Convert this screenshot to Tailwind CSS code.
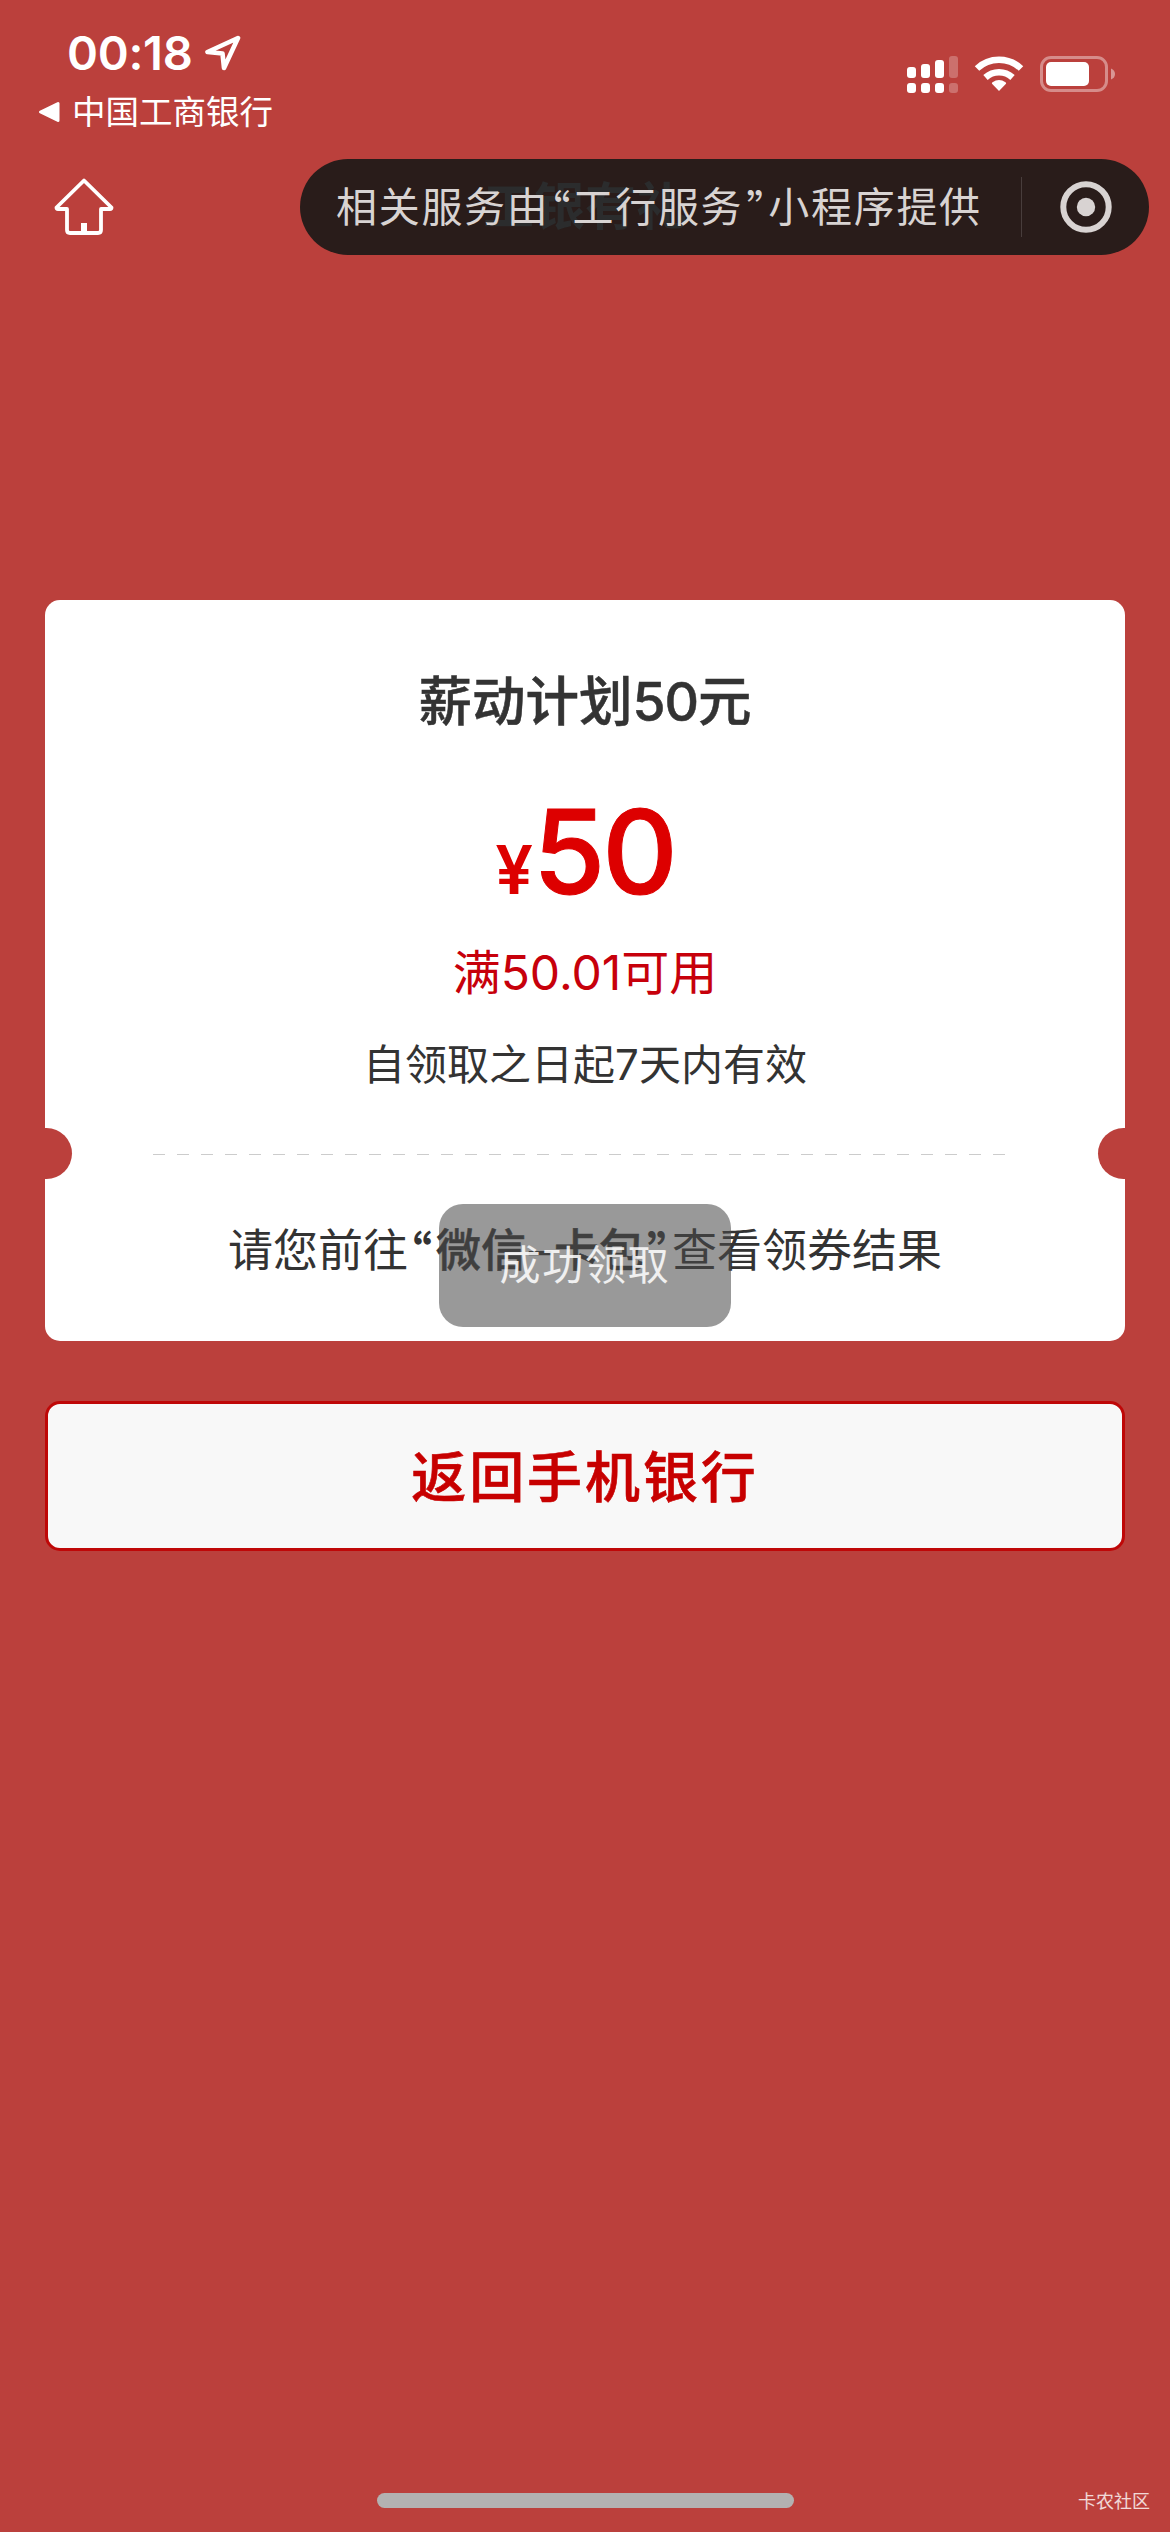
<!DOCTYPE html>
<html lang="zh-CN">
<head>
<meta charset="utf-8">
<title>工银有礼</title>
<script src="https://cdn.jsdelivr.net/npm/@tailwindcss/browser@4"></script>
</head>
<body class="bg-[#bb403c] font-['Inter','Noto_Sans_CJK_SC',sans-serif]">
<div class="relative flex h-[2532px] w-[1170px] flex-col overflow-hidden bg-[#bb403c]">

  <!-- status bar -->
  <div class="flex h-[159px] justify-between pt-[24px] text-white">
    <div class="flex flex-col pl-[38px]">
      <div class="flex h-[58px] items-center pl-[29px]">
        <span class="w-[128px] whitespace-nowrap text-[47px] leading-[58px] font-semibold tracking-[-0.3px]">00:18</span>
        <svg class="ml-[9px] h-[36px] w-[37px]" viewBox="0 0 37 36" fill="none" stroke="white" stroke-width="4.6" stroke-linejoin="round"><path d="M34 3 L3.500 17 L18.500 18.500 L20 33 Z"/></svg>
      </div>
      <div class="flex h-[60px] items-center">
        <svg class="h-[22px] w-[22px]" viewBox="0 0 22 22" fill="white" stroke="white" stroke-width="3" stroke-linejoin="round"><path d="M2.500 11 L20 2.500 V19.500 Z"/></svg>
        <span class="ml-[12px] text-[33.500px] leading-[60px] font-normal">中国工商银行</span>
      </div>
    </div>
    <div class="flex h-[60px] pt-[30px] pr-[54px]">
      <svg class="h-[40px] w-[210px]" viewBox="906 54 210 40" fill="white">
        <rect x="907" y="67" width="9" height="11" rx="3"/>
        <rect x="921" y="64" width="9" height="14" rx="3"/>
        <rect x="935" y="60" width="9" height="18" rx="3"/>
        <rect x="949" y="56" width="9" height="22" rx="3" opacity=".25"/>
        <rect x="907" y="83" width="9" height="10" rx="3"/>
        <rect x="921" y="83" width="9" height="10" rx="3"/>
        <rect x="935" y="83" width="9" height="10" rx="3"/>
        <rect x="949" y="83" width="9" height="10" rx="3" opacity=".25"/>
        <g fill="none" stroke="white" stroke-width="6.500">
          <path d="M977 68.500 A32 32 0 0 1 1021 68.500"/>
          <path d="M985.500 77.500 A20 20 0 0 1 1012.500 77.500"/>
        </g>
        <path d="M999 91 L992 83.700 Q991.500 82.800 992.500 82.200 Q999 78 1005.500 82.200 Q1006.500 82.800 1006 83.700 Z"/>
        <rect x="1041.500" y="57.500" width="65" height="33" rx="9.500" fill="none" stroke="white" stroke-opacity=".4" stroke-width="3"/>
        <rect x="1046" y="62" width="43" height="24" rx="5"/>
        <path d="M1111 68.500 Q1115 70 1115 74 Q1115 78 1111 79.500 Z" opacity=".45"/>
      </svg>
    </div>
  </div>

  <!-- navigation bar -->
  <div class="flex h-[96px] items-center justify-between pr-[21px] pl-[54px]">
    <svg class="h-[58px] w-[60px]" viewBox="0 0 60 58" fill="none" stroke="white" stroke-width="3.800" stroke-linejoin="round"><path d="M30 2.500 L2.500 29.500 Q2.500 31 4 31 H13 V52 Q13 55 16 55 H44 Q47 55 47 52 V31 H56 Q57.500 31 57.500 29.500 Z"/><path d="M30 45 V55" stroke-width="6"/></svg>
    <div class="relative flex h-[96px] w-[849px] items-center rounded-full bg-[#291c1a] pl-[36px] text-[#d8d3d2]">
      <span class="absolute top-[18px] left-[183px] text-[51px] leading-[60px] font-bold whitespace-nowrap text-[#2b2c2d]">工银有礼</span>
      <div class="relative flex w-[685px] text-[41px] leading-[60px] tracking-[1.700px] whitespace-nowrap">
        <span>相关服务由</span><span class="flex w-[23px] justify-end pr-[2px] font-['Noto_Sans_CJK_SC'] tracking-normal">“</span><span>工行服务</span><span class="flex w-[25px] justify-start pl-[3px] font-['Noto_Sans_CJK_SC'] tracking-normal">”</span><span>小程序提供</span>
      </div>
      <div class="h-[60px] w-px bg-white/15"></div>
      <svg class="ml-[38px] h-[52px] w-[52px]" viewBox="0 0 52 52"><circle cx="26" cy="26" r="22.700" fill="none" stroke="#d8d3d2" stroke-width="6"/><circle cx="26" cy="26" r="9.200" fill="#d8d3d2"/></svg>
    </div>
  </div>

  <!-- coupon -->
  <div class="relative mx-[45px] mt-[345px] flex h-[741px] flex-col items-center overflow-hidden rounded-[15px] bg-white text-[#333]">
    <h1 class="mt-[63px] text-[53.500px] leading-[78px] font-medium [-webkit-text-stroke:0.5px_#333]">薪动计划<span class="tracking-[-1px]">50</span>元</h1>
    <div class="mt-[41px] flex h-[140px] items-baseline text-[#dd0000]">
      <span class="text-[67px] leading-[140px] font-semibold">¥</span><span class="text-[117px] leading-[140px] font-medium tracking-[-3px] [-webkit-text-stroke:1px_#dd0000]">50</span>
    </div>
    <div class="mt-[17px] text-[48px] leading-[68px] text-[#c7000b]">满50.01可用</div>
    <div class="mt-[28px] text-[42px] leading-[60px]">自领取之日起7天内有效</div>
    <div class="mt-[59px] mr-[12px] h-px w-[852px] bg-[repeating-linear-gradient(90deg,#ccc_0,#ccc_12px,transparent_12px,transparent_24px)]"></div>
    <div class="mt-[64px] flex text-[45px] leading-[64px] whitespace-nowrap">
      <span>请您前往</span><span class="flex w-[28px] justify-end pr-[4px] font-['Noto_Sans_CJK_SC'] font-bold">“</span><span class="font-medium [-webkit-text-stroke:0.5px_#333]">微信</span><span class="w-[28px] text-center font-medium">–</span><span class="font-medium [-webkit-text-stroke:0.5px_#333]">卡包</span><span class="flex w-[28px] justify-start pl-[3px] font-['Noto_Sans_CJK_SC'] font-bold">”</span><span>查看领券结果</span>
    </div>
    <div class="absolute top-[528px] -left-[24px] h-[51px] w-[51px] rounded-full bg-[#bb403c]"></div>
    <div class="absolute top-[528px] -right-[24px] h-[51px] w-[51px] rounded-full bg-[#bb403c]"></div>
  </div>

  <button class="mx-[45px] mt-[60px] h-[150px] rounded-[15px] border-[3px] border-[#bf0707] bg-[#f8f8f8] pt-[2px] text-[55px] leading-[80px] font-medium tracking-[2.900px] text-[#c70000] [-webkit-text-stroke:0.6px_#c70000]">返回手机银行</button>

  <!-- toast -->
  <div class="absolute top-[1204px] left-[439px] flex h-[123px] w-[292px] items-center justify-center rounded-[24px] bg-[#4a4a4a]/56 text-[41px] tracking-[1.700px] text-white/85">成功领取</div>

  <!-- home indicator -->
  <div class="mt-auto mb-[24px] ml-[377px] flex h-[15px] items-center">
    <div class="h-[15px] w-[417px] shrink-0 rounded-full bg-[#b3b1b1]"></div>
    <span class="ml-[284px] pt-[2px] text-[18px] leading-[15px] whitespace-nowrap text-white/80">卡农社区</span>
  </div>
</div>
</body>
</html>
